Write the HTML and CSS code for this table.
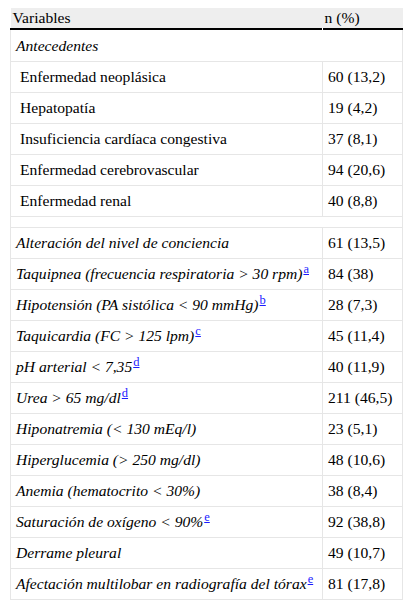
FILE: index.html
```html
<!DOCTYPE html>
<html lang="es">
<head>
<meta charset="utf-8">
<link rel="stylesheet" href="styles.css">
</head>
<body>
<table class="tbl">
  <thead>
    <tr><th class="c1">Variables</th><th class="c2">n (%)</th></tr>
  </thead>
  <tbody>
    <tr><td class="sect" colspan="2"><i>Antecedentes</i></td></tr>
    <tr><td class="ind">Enfermedad neoplásica</td><td>60 (13,2)</td></tr>
    <tr><td class="ind">Hepatopatía</td><td>19 (4,2)</td></tr>
    <tr><td class="ind">Insuficiencia cardíaca congestiva</td><td>37 (8,1)</td></tr>
    <tr><td class="ind">Enfermedad cerebrovascular</td><td>94 (20,6)</td></tr>
    <tr><td class="ind">Enfermedad renal</td><td>40 (8,8)</td></tr>
    <tr class="spacer"><td colspan="2"></td></tr>
    <tr><td><i>Alteración del nivel de conciencia</i></td><td>61 (13,5)</td></tr>
    <tr><td><i>Taquipnea (frecuencia respiratoria &gt; 30 rpm)</i><a class="fn" href="#">a</a></td><td>84 (38)</td></tr>
    <tr><td><i>Hipotensión (PA sistólica &lt; 90 mmHg)</i><a class="fn" href="#">b</a></td><td>28 (7,3)</td></tr>
    <tr><td><i>Taquicardia (FC &gt; 125 lpm)</i><a class="fn" href="#">c</a></td><td>45 (11,4)</td></tr>
    <tr><td><i>pH arterial &lt; 7,35</i><a class="fn" href="#">d</a></td><td>40 (11,9)</td></tr>
    <tr><td><i>Urea &gt; 65 mg/dl</i><a class="fn" href="#">d</a></td><td>211 (46,5)</td></tr>
    <tr><td><i>Hiponatremia (&lt; 130 mEq/l)</i></td><td>23 (5,1)</td></tr>
    <tr><td><i>Hiperglucemia (&gt; 250 mg/dl)</i></td><td>48 (10,6)</td></tr>
    <tr><td><i>Anemia (hematocrito &lt; 30%)</i></td><td>38 (8,4)</td></tr>
    <tr><td><i>Saturación de oxígeno &lt; 90%</i><a class="fn" href="#">e</a></td><td>92 (38,8)</td></tr>
    <tr><td><i>Derrame pleural</i></td><td>49 (10,7)</td></tr>
    <tr><td><i>Afectación multilobar en radiografía del tórax</i><a class="fn" href="#">e</a></td><td>81 (17,8)</td></tr>
  </tbody>
</table>
</body>
</html>
```
FILE: styles.css
```css
html, body {
  margin: 0;
  padding: 0;
  background: #fff;
}
body {
  font-family: "Liberation Serif", "Times New Roman", serif;
  font-size: 15.6px;
  color: #000;
}
.tbl {
  margin: 8px 0 0 10px;
  width: 393px;
  border-collapse: collapse;
  table-layout: fixed;
}
.tbl th {
  background: #eeeeee;
  font-weight: normal;
  text-align: left;
  line-height: 18px;
  padding: 1px 2px 1px 2px;
  border-bottom: 2px solid #000;
}
.tbl th.c1 {
  width: 308px;
  position: relative;
}
.tbl th.c1::after {
  content: "";
  position: absolute;
  right: 0;
  bottom: -2px;
  width: 1px;
  height: 2px;
  background: #fff;
}
.tbl td {
  border: 1px solid #e6e6e6;
  line-height: 18px;
  padding: 6px 4px 6px 5px;
  white-space: nowrap;
}
.tbl td.ind {
  padding-left: 9px;
}
.tbl td.sect {
  padding-top: 7px;
}
.tbl tr.spacer td {
  height: 10px;
  padding: 0;
  line-height: 0;
}
.fn {
  color: #1a1aff;
  text-decoration: underline;
  font-size: 12.5px;
  vertical-align: 6px;
  line-height: 0;
  margin-left: 1px;
}
```
